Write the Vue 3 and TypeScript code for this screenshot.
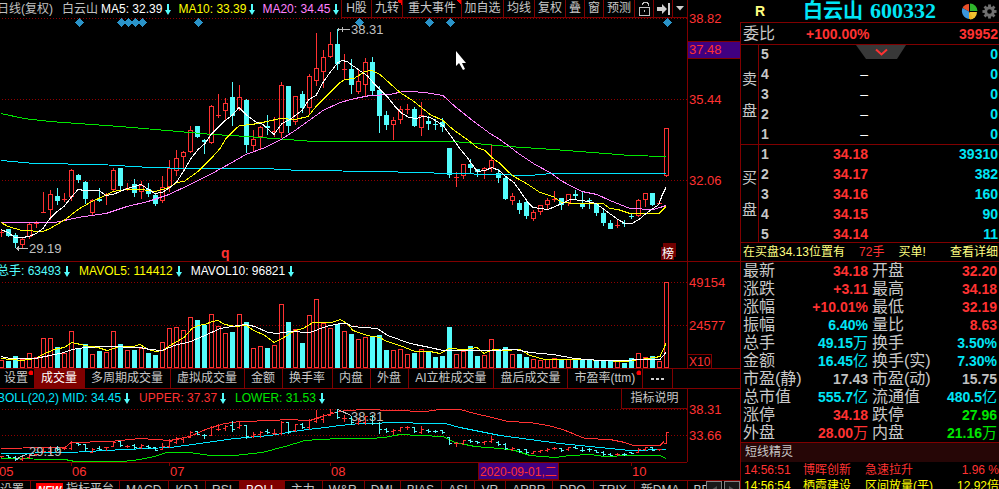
<script setup lang="ts">
import { computed, onBeforeUnmount, onMounted, ref } from 'vue'

type Candle = [high: number, top: number, bottom: number, low: number, dir: 0 | 1]
type Point = [number, number]

const BASE = 687
const plot = ref<HTMLElement | null>(null)
const width = ref(BASE)
let observer: ResizeObserver | undefined
onMounted(() => {
  observer = new ResizeObserver(() => {
    if (plot.value) width.value = plot.value.clientWidth || BASE
  })
  if (plot.value) observer.observe(plot.value)
})
onBeforeUnmount(() => observer?.disconnect())

const sx = (x: number) => (x * width.value) / BASE
const cx = (i: number) => Math.floor(sx(1.5 + 7 * i)) + 0.5
const line = (pts: Point[]) => pts.map(([x, y]) => `${sx(x).toFixed(1)},${y + 0.5}`).join(' ')

// 1 = rising day, 0 = falling day
const candles: Candle[] = [
  [230, 232, 233, 237, 1], [229, 229, 236, 237, 0], [233, 235, 243, 248, 0], [237, 239, 245, 247, 1],
  [223, 224, 237, 238, 1], [221, 223, 223, 228, 1], [192, 212, 212, 213, 1], [190, 194, 210, 219, 1],
  [188, 196, 201, 205, 0], [193, 199, 199, 202, 1], [169, 170, 197, 200, 1], [174, 175, 180, 183, 0],
  [181, 182, 199, 204, 0], [199, 200, 213, 214, 1], [188, 199, 201, 202, 0], [193, 194, 194, 205, 1],
  [168, 170, 190, 190, 1], [168, 168, 186, 190, 0], [183, 188, 190, 191, 1], [179, 184, 193, 197, 0],
  [181, 185, 192, 198, 1], [183, 189, 194, 197, 0], [193, 195, 204, 206, 0], [176, 187, 201, 202, 1],
  [160, 168, 187, 191, 1], [150, 158, 171, 175, 1], [151, 152, 157, 170, 1], [126, 130, 152, 152, 1],
  [126, 126, 137, 138, 0], [139, 140, 142, 154, 0], [105, 106, 143, 143, 1], [94, 115, 115, 118, 1],
  [98, 103, 111, 119, 1], [82, 97, 116, 126, 0], [85, 97, 109, 110, 1], [99, 100, 145, 153, 0],
  [130, 139, 146, 151, 1], [126, 127, 137, 148, 1], [115, 126, 128, 135, 0], [117, 131, 132, 137, 1],
  [82, 85, 133, 137, 1], [86, 86, 126, 133, 0], [96, 96, 122, 124, 1], [91, 94, 108, 113, 0],
  [74, 76, 108, 114, 1], [33, 68, 81, 85, 1], [50, 57, 72, 87, 1], [32, 44, 57, 57, 1],
  [29, 44, 64, 70, 0], [54, 69, 69, 80, 1], [59, 69, 85, 94, 0], [69, 81, 92, 93, 1],
  [58, 62, 85, 96, 1], [57, 62, 91, 95, 0], [86, 90, 116, 133, 0], [111, 115, 125, 130, 0],
  [117, 120, 125, 139, 1], [106, 109, 120, 123, 1], [104, 109, 109, 114, 1], [107, 109, 126, 127, 0],
  [102, 115, 128, 135, 1], [116, 121, 124, 130, 0], [119, 124, 125, 130, 0], [118, 122, 127, 132, 0],
  [148, 148, 175, 178, 0], [172, 177, 177, 187, 1], [164, 164, 176, 178, 1], [159, 164, 168, 173, 0],
  [169, 169, 172, 177, 0], [167, 168, 171, 178, 1], [145, 160, 168, 171, 1], [169, 173, 178, 183, 0],
  [177, 178, 199, 200, 0], [193, 196, 201, 204, 1], [200, 203, 210, 214, 0], [200, 202, 216, 219, 0],
  [210, 212, 219, 220, 1], [205, 205, 212, 214, 1], [198, 200, 205, 209, 1], [191, 199, 199, 202, 1],
  [198, 198, 205, 210, 0], [194, 194, 203, 205, 1], [190, 194, 196, 199, 0], [192, 204, 207, 209, 0],
  [198, 200, 201, 209, 0], [204, 204, 213, 216, 0], [209, 213, 223, 226, 0], [220, 223, 229, 229, 0],
  [219, 225, 225, 228, 1], [220, 223, 224, 227, 0], [214, 216, 217, 219, 0], [199, 200, 216, 216, 1],
  [193, 193, 200, 206, 1], [193, 193, 205, 206, 0], [200, 203, 203, 204, 1], [128, 128, 176, 176, 1],
]

const volumes = [
  360, 361, 356, 359, 353, 357, 338, 338, 347, 353, 331, 348, 344, 354, 351, 352, 331, 344, 350, 350,
  348, 353, 355, 342, 328, 327, 330, 317, 320, 325, 314, 326, 333, 332, 314, 322, 348, 346, 348, 345,
  304, 322, 329, 343, 315, 299, 323, 328, 324, 331, 334, 339, 337, 337, 335, 350, 350, 349, 354, 353,
  349, 351, 357, 356, 327, 354, 351, 346, 356, 355, 339, 349, 347, 354, 354, 357, 359, 360, 359, 358,
  360, 359, 358, 359, 360, 360, 361, 361, 361, 363, 358, 353, 357, 356, 361, 282,
]

const ma5: Point[] = [[1, 229], [8, 232], [15, 237], [22, 237], [29, 236], [36, 233], [43, 228], [50, 218], [57, 211], [64, 206], [71, 197], [78, 189], [85, 190], [99, 190], [106, 195], [113, 194], [127, 188], [141, 184], [147, 188], [155, 193], [162, 192], [170, 187], [177, 181], [184, 170], [191, 158], [198, 149], [205, 143], [211, 134], [218, 127], [225, 120], [232, 115], [239, 107], [246, 114], [255, 121], [263, 124], [274, 134], [282, 123], [290, 119], [302, 110], [309, 99], [316, 95], [323, 82], [330, 72], [338, 62], [342, 60], [347, 61], [354, 66], [361, 71], [367, 75], [374, 83], [381, 90], [388, 97], [395, 106], [402, 113], [409, 117], [416, 118], [423, 116], [430, 117], [437, 121], [443, 125], [452, 137], [459, 147], [468, 158], [475, 168], [478, 171], [485, 170], [492, 167], [499, 170], [507, 177], [514, 182], [521, 192], [528, 202], [533, 207], [548, 209], [555, 206], [562, 203], [570, 199], [583, 200], [596, 203], [604, 209], [611, 214], [618, 219], [625, 223], [632, 223], [639, 219], [646, 213], [653, 208], [659, 204], [662, 195], [666, 187]]
const ma10: Point[] = [[1, 222], [8, 226], [22, 230], [43, 231], [50, 228], [64, 220], [78, 209], [92, 201], [105, 195], [113, 191], [127, 189], [141, 189], [155, 191], [169, 187], [177, 182], [184, 181], [198, 171], [212, 157], [220, 148], [226, 138], [236, 128], [240, 125], [252, 124], [267, 121], [280, 118], [295, 119], [308, 116], [316, 106], [330, 92], [340, 82], [345, 79], [354, 78], [365, 71], [372, 70], [380, 74], [400, 92], [414, 101], [430, 114], [443, 120], [453, 129], [470, 141], [477, 147], [485, 150], [492, 157], [500, 163], [508, 171], [514, 176], [521, 180], [528, 184], [540, 192], [553, 196], [562, 202], [576, 203], [603, 203], [610, 208], [618, 209], [630, 213], [659, 213], [666, 206]]
const ma20: Point[] = [[1, 222], [55, 222], [78, 217], [106, 213], [127, 206], [148, 201], [169, 194], [190, 184], [212, 173], [232, 162], [246, 154], [265, 147], [281, 139], [295, 130], [309, 120], [323, 110], [340, 102], [355, 98], [370, 95], [390, 94], [403, 91], [410, 91], [425, 92], [443, 95], [455, 106], [470, 118], [482, 127], [490, 133], [500, 139], [508, 145], [520, 154], [535, 164], [550, 172], [561, 180], [568, 184], [582, 191], [597, 194], [610, 200], [630, 208], [653, 209], [660, 207], [666, 205]]
const maLong: Point[] = [[1, 113], [24, 118], [50, 121], [120, 126], [167, 130], [213, 134], [247, 136], [287, 139], [313, 141], [453, 141], [508, 146], [553, 149], [593, 152], [630, 155], [666, 156]]
const maYear: Point[] = [[1, 160], [35, 163], [100, 164], [150, 167], [190, 168], [265, 168], [300, 170], [383, 171], [412, 172], [455, 173], [530, 175], [552, 173], [666, 173]]
const vol5: Point[] = [[1, 358], [22, 360], [36, 358], [43, 354], [54, 349], [64, 347], [72, 342], [85, 345], [98, 347], [107, 350], [120, 346], [133, 346], [140, 344], [148, 349], [156, 351], [163, 350], [170, 345], [184, 337], [192, 328], [198, 325], [205, 324], [212, 321], [218, 320], [225, 324], [235, 326], [246, 325], [254, 330], [265, 335], [274, 342], [282, 338], [295, 330], [303, 328], [313, 322], [332, 322], [340, 319], [347, 323], [353, 330], [367, 335], [380, 337], [387, 341], [400, 345], [415, 351], [430, 351], [440, 353], [449, 348], [465, 349], [477, 347], [484, 353], [493, 349], [505, 350], [520, 349], [530, 355], [545, 359], [585, 359], [600, 360], [625, 361], [640, 359], [655, 357], [660, 356], [666, 343]]
const vol10: Point[] = [[1, 356], [10, 358], [35, 358], [50, 355], [64, 352], [72, 349], [85, 347], [105, 346], [140, 347], [150, 349], [162, 350], [177, 344], [188, 342], [205, 335], [220, 328], [232, 326], [245, 324], [255, 326], [268, 332], [277, 333], [290, 331], [310, 332], [318, 329], [326, 326], [340, 323], [347, 323], [352, 326], [377, 328], [388, 335], [410, 343], [430, 347], [443, 350], [490, 350], [515, 349], [530, 352], [553, 354], [575, 358], [600, 360], [625, 360], [640, 359], [660, 359], [666, 352]]
const upper: Point[] = [[1, 448], [45, 447], [65, 447], [71, 442], [110, 441], [120, 440], [140, 438], [170, 440], [190, 436], [208, 428], [225, 423], [240, 421], [275, 420], [285, 419], [310, 420], [325, 415], [340, 411], [347, 410], [365, 409], [395, 410], [425, 411], [440, 409], [460, 409], [475, 413], [492, 417], [508, 421], [530, 422], [548, 425], [563, 429], [575, 434], [585, 438], [610, 439], [625, 442], [633, 445], [660, 445], [664, 441]]
const mid: Point[] = [[1, 453], [70, 452], [105, 450], [125, 449], [170, 447], [200, 443], [235, 438], [270, 435], [300, 430], [325, 427], [340, 425], [360, 423], [405, 422], [420, 423], [445, 423], [460, 427], [480, 431], [500, 435], [530, 439], [560, 443], [590, 446], [620, 449], [630, 450], [666, 449]]
const lower: Point[] = [[1, 458], [65, 459], [75, 461], [123, 461], [140, 459], [155, 456], [166, 452], [190, 452], [210, 455], [235, 455], [262, 452], [285, 446], [305, 440], [320, 439], [340, 438], [370, 438], [385, 437], [400, 434], [420, 435], [443, 436], [455, 442], [475, 446], [500, 448], [515, 450], [530, 455], [555, 457], [570, 455], [590, 454], [605, 456], [630, 455], [660, 455], [666, 458]]

const scaleBoll = (y: number) => Math.round(409 + (y - 30) * 0.2333) + 0.5
const ohlc = computed(() =>
  candles.map(([h, t, b, l, up], i) => {
    const x = cx(i)
    const open = scaleBoll(up ? b : t)
    const close = scaleBoll(up ? t : b)
    return { up, d: `M${x} ${scaleBoll(h) - 0.5}V${scaleBoll(l) + 0.5}M${x - 2.5} ${open}H${x}M${x} ${close}H${x + 2.5}` }
  }),
)
const markers = [79, 121, 128, 135, 142, 198, 359, 429, 450, 667]

const tools = [
  { name: 'H股', w: 30 }, { name: '九转', w: 31, flag: true }, { name: '重大事件', w: 59, flag: true },
  { name: '加自选', w: 42 }, { name: '均线', w: 31 }, { name: '复权', w: 31 }, { name: '叠', w: 19 },
  { name: '窗', w: 19 }, { name: '预测', w: 31 },
]
const volTabs = ['设置', '成交量', '多周期成交量', '虚拟成交量', '金额', '换手率', '内盘', '外盘', 'AI立桩成交量', '盘后成交量', '市盈率(ttm)']
const indicators = ['MACD', 'KDJ', 'RSI', 'BOLL', '主力', 'W&R', 'DMI', 'BIAS', 'ASI', 'VR', 'ARBR', 'DPO', 'TRIX', '新DMA', 'BBI']
const months = [{ x: -1, t: '05' }, { x: 72, t: '06' }, { x: 170, t: '07' }, { x: 331, t: '08' }, { x: 632, t: '10' }]

const sells = [5, 4, 3, 2, 1]
const buys: [string, string][] = [['34.18', '39310'], ['34.17', '382'], ['34.16', '160'], ['34.15', '90'], ['34.14', '11']]

interface Stat { label: string; value: string; unit?: string; tone: string }
const stats: [Stat, Stat][] = [
  [{ label: '最新', value: '34.18', tone: 'up' }, { label: '开盘', value: '32.20', tone: 'up' }],
  [{ label: '涨跌', value: '+3.11', tone: 'up' }, { label: '最高', value: '34.18', tone: 'up' }],
  [{ label: '涨幅', value: '+10.01%', tone: 'up' }, { label: '最低', value: '32.19', tone: 'up' }],
  [{ label: '振幅', value: '6.40%', tone: 'info' }, { label: '量比', value: '8.63', tone: 'up' }],
  [{ label: '总手', value: '49.15', unit: '万', tone: 'info' }, { label: '换手', value: '3.50%', tone: 'info' }],
  [{ label: '金额', value: '16.45', unit: '亿', tone: 'info' }, { label: '换手(实)', value: '7.30%', tone: 'info' }],
  [{ label: '市盈(静)', value: '17.43', tone: 'plain' }, { label: '市盈(动)', value: '15.75', tone: 'plain' }],
  [{ label: '总市值', value: '555.7', unit: '亿', tone: 'info' }, { label: '流通值', value: '480.5', unit: '亿', tone: 'info' }],
  [{ label: '涨停', value: '34.18', tone: 'up' }, { label: '跌停', value: '27.96', tone: 'down' }],
  [{ label: '外盘', value: '28.00', unit: '万', tone: 'up' }, { label: '内盘', value: '21.16', unit: '万', tone: 'down' }],
]
const activeVol = ref('成交量')
const activeInd = ref('BOLL')
</script>

<template>
  <div class="app">
    <main class="charts">
      <section class="pane">
        <div ref="plot" class="plot">
          <header class="bar">
            <div class="legend top">
              <span class="gray period">日线(复权)</span><span class="gray name">白云山</span>
              <span class="white">MA5: 32.39<svg class="arrow" viewBox="0 0 6 11"><path d="M2 0h2v6h2L3 11 0 6h2z" /></svg></span>
              <span class="yellow">MA10: 33.39<svg class="arrow" viewBox="0 0 6 11"><path d="M2 0h2v6h2L3 11 0 6h2z" /></svg></span>
              <span class="pink">MA20: 34.45<svg class="arrow" viewBox="0 0 6 11"><path d="M2 0h2v6h2L3 11 0 6h2z" /></svg></span>
            </div>
            <nav class="tools">
              <button v-for="t in tools" :key="t.name" type="button" :class="{ flag: t.flag }" :style="{ width: t.w + 'px' }">{{ t.name }}</button>
              <button type="button" class="ico" aria-label="锁定">
                <svg width="13" height="15" viewBox="0 0 13 15" fill="none" stroke="#c0c0c0" shape-rendering="crispEdges"><path d="M1.500 6.500h10v8h-10zM6.500 9v2" /><path d="M4.500 4V2.500h1v-1h4v1h1V5" /></svg>
              </button>
              <button type="button" class="ico" aria-label="前进">
                <svg width="13" height="12" viewBox="0 0 13 12"><path d="M0 4h5V1l5 5-5 5V8H0zM11 0h2v12h-2z" fill="#d0d0d0" /></svg>
              </button>
              <button type="button" class="ico last" aria-label="更多">
                <svg width="8" height="5" viewBox="0 0 8 5"><path d="M0 0h8L4 4.500z" fill="#d0d0d0" /></svg>
              </button>
            </nav>
          </header>
          <svg class="k" :viewBox="`0 18 ${width} 243`" shape-rendering="crispEdges">
            <path class="grid" :d="`M2 18.500H${width}M2 99.500H${width}M2 180.500H${width}`" />
            <g v-for="(c, i) in candles" :key="i" :class="c[4] ? 'rise' : 'fall'">
              <template v-if="c[4] && c[2] - c[1] > 2">
                <path :d="`M${cx(i)} ${c[0]}V${c[1]}M${cx(i)} ${c[2]}V${c[3] + 1}`" />
                <rect :x="cx(i) - 2" :y="c[1] + 0.5" width="4" :height="c[2] - c[1] - 1" fill="none" />
              </template>
              <template v-else>
                <path :d="`M${cx(i)} ${c[0]}V${c[3]}`" />
                <rect class="solid" :x="cx(i) - 2.5" :y="c[1]" width="5" :height="Math.max(c[2] - c[1], 1)" />
              </template>
            </g>
            <polyline class="ln s-green" :points="line(maLong)" />
            <polyline class="ln s-cyan" :points="line(maYear)" />
            <polyline class="ln s-pink" :points="line(ma20)" />
            <polyline class="ln s-yellow" :points="line(ma10)" />
            <polyline class="ln s-white" :points="line(ma5)" />
            <path v-for="m in markers" :key="m" class="mark" :d="`M${sx(m) + 0.5} 18l4.500 4.500-4.500 4.500-4.500-4.500z`" />
            <path class="lead" :d="`M${sx(338)} 29.500h12M${sx(338)} 28v3M${sx(342)} 27v5`" />
            <text :x="sx(351)" y="34">38.31</text>
            <path class="lead" :d="`M${sx(16)} 248.500h12M${sx(17.5)} 247v3M${sx(18.5)} 246v5`" />
            <text :x="sx(29)" y="253">29.19</text>
            <text class="q" :x="sx(221)" y="258">q</text>
            <path fill="#700000" :d="`M${sx(663)} 243h13v14h-2v3h-13v-13h2z`" />
            <text class="rank" :x="sx(662)" y="258">榜</text>
            <path fill="#fff" shape-rendering="auto" :d="`M${sx(456)} 51v15l3-3 4 7 2-1-3-6h4z`" />
          </svg>
        </div>
        <svg class="axis tall" viewBox="0 0 52 261">
          <rect class="cursor-box" x="-1" y="41.500" width="54" height="17" shape-rendering="crispEdges" />
          <text x="1" y="23">38.82</text><text x="1" y="54">37.48</text><text x="1" y="104">35.44</text><text x="1" y="185">32.06</text>
        </svg>
      </section>

      <section class="pane vol">
        <div class="plot">
          <div class="legend">
            <span class="aqua">总手: 63493<svg class="arrow" viewBox="0 0 6 11"><path d="M2 0h2v6h2L3 11 0 6h2z" /></svg></span>
            <span class="yellow">MAVOL5: 114412<svg class="arrow" viewBox="0 0 6 11"><path d="M2 0h2v6h2L3 11 0 6h2z" /></svg></span>
            <span class="white">MAVOL10: 96821<svg class="arrow" viewBox="0 0 6 11"><path d="M2 0h2v6h2L3 11 0 6h2z" /></svg></span>
          </div>
          <svg class="v" :viewBox="`0 281 ${width} 87`" shape-rendering="crispEdges">
            <path class="grid" :d="`M2 282.500H${width}M2 325.500H${width}`" />
            <g v-for="(v, i) in volumes" :key="i" :class="candles[i][4] ? 'rise' : 'fall'">
              <rect v-if="candles[i][4]" :x="cx(i) - 2" :y="v + 0.5" width="4" :height="367 - v" fill="none" />
              <rect v-else class="solid" :x="cx(i) - 2.5" :y="v" width="5" :height="368 - v" />
            </g>
            <polyline class="ln s-yellow" :points="line(vol5)" />
            <polyline class="ln s-white" :points="line(vol10)" />
          </svg>
        </div>
        <svg class="axis short" viewBox="0 0 52 106">
          <text x="1" y="25">49154</text><text x="1" y="68">24577</text>
          <path d="M0 92.500h23.500V106" fill="none" stroke="#800000" shape-rendering="crispEdges" /><text x="1" y="104" class="mult">X10</text>
        </svg>
      </section>

      <nav class="tabs">
        <button v-for="(t, i) in volTabs" :key="t" type="button" :class="{ on: t === activeVol, dot: i === 0 || i === 10 }" @click="activeVol = t">{{ t }}</button>
        <button type="button" class="more" aria-label="更多指标">
          <svg width="13" height="2" viewBox="0 0 13 2"><path d="M0 0h3v2H0zM5 0h3v2H5zM10 0h3v2h-3z" fill="#d0d0d0" /></svg>
        </button>
      </nav>

      <section class="pane boll">
        <div class="plot framed">
          <div class="bar short-bar">
            <div class="legend">
              <span class="sky">BOLL(20,2) MID: 34.45<svg class="arrow" viewBox="0 0 6 11"><path d="M2 0h2v6h2L3 11 0 6h2z" /></svg></span>
              <span class="red">UPPER: 37.37<svg class="arrow" viewBox="0 0 6 11"><path d="M2 0h2v6h2L3 11 0 6h2z" /></svg></span>
              <span class="green">LOWER: 31.53<svg class="arrow" viewBox="0 0 6 11"><path d="M2 0h2v6h2L3 11 0 6h2z" /></svg></span>
            </div>
            <button type="button" class="explain">指标说明</button>
          </div>
          <svg class="b" :viewBox="`0 408 ${width} 54`" shape-rendering="crispEdges">
            <path class="grid" :d="`M2 409.500H${width}M2 435.500H${width}`" />
            <polyline class="ln s-red" :points="line(upper)" />
            <polyline class="ln s-cyan" :points="line(mid)" />
            <polyline class="ln s-green" :points="line(lower)" />
            <path v-for="(o, i) in ohlc" :key="i" :class="o.up ? 'rise' : 'fall'" :d="o.d" />
            <path class="lead" :d="`M${sx(338)} 409.500l13 6M${sx(16)} 459l11-5M${sx(15)} 458h4`" />
            <text :x="sx(351)" y="421">38.31</text>
            <text :x="sx(29)" y="456">29.19</text>
          </svg>
        </div>
        <svg class="axis low" viewBox="0 0 52 73">
          <text x="1" y="25">38.31</text><text x="1" y="51">33.66</text>
        </svg>
      </section>

      <svg class="dates" height="17">
        <g v-for="m in months" :key="m.t"><path :d="`M${sx(m.x) - 0.5} 0v3`" stroke="#800000" /><text :x="sx(m.x)" y="13">{{ m.t }}</text></g>
        <rect class="cursor-box" :x="sx(478) + 0.5" y="-1" width="80" height="17" shape-rendering="crispEdges" />
        <text class="day" :x="sx(479) + 1" y="13">2020-09-01,二</text>
      </svg>

      <nav class="tabs ind">
        <div class="strip">
          <button type="button" class="set">设置</button>
          <button type="button" class="platform"><em>NEW</em>指标平台</button>
          <button v-for="t in indicators" :key="t" type="button" :class="{ on: t === activeInd }" @click="activeInd = t">{{ t }}</button>
        </div>
        <div class="scroll">
          <button type="button" aria-label="向左"><svg width="6" height="8" viewBox="0 0 6 8"><path d="M6 0v8L0 4z" /></svg></button>
          <button type="button" aria-label="向右"><svg width="6" height="8" viewBox="0 0 6 8"><path d="M0 0v8l6-4z" /></svg></button>
        </div>
      </nav>
    </main>

    <aside class="quote">
      <header class="title">
        <b class="r">R</b>
        <h1>白云山 <span>600332</span></h1>
        <div class="icons">
          <svg width="17" height="17" viewBox="0 0 17 17">
            <path d="M8 8.500V1A7.500 7.500 0 0 0 1.500 5z" fill="#e8502a" />
            <path d="M8 8.500L1.500 5A8 8 0 0 0 8 16z" fill="#3a96dc" />
            <path d="M9 9v7.500A7.500 7.500 0 0 0 16 9z" fill="#f2c230" />
            <path d="M9 8V.500A7.500 7.500 0 0 1 16.500 8z" fill="#2fb52c" />
            <path d="M8 8.500V16A8 8 0 0 0 12 15z" fill="#f0b020" />
          </svg>
          <svg width="15" height="15" viewBox="-8 -8 16 16">
            <g fill="#707070"><rect v-for="a in 8" :key="a" x="-1.500" y="-7.500" width="3" height="4" :transform="`rotate(${a * 45})`" /></g>
            <circle r="4" fill="none" stroke="#707070" stroke-width="3" />
          </svg>
        </div>
      </header>
      <div class="body">
        <div class="ratio"><span class="cn">委比</span><b class="up">+100.00%</b><b class="up end">39952</b></div>
        <div class="book sell">
          <div class="side"><span>卖</span><span>盘</span></div>
          <table>
            <tbody>
              <tr v-for="s in sells" :key="s"><th scope="row">{{ s }}</th><td class="dash">{{ s === 5 ? '' : '–' }}</td><td class="qty">0</td></tr>
            </tbody>
          </table>
          <button type="button" class="fold" aria-label="展开">
            <svg width="50" height="14" viewBox="0 0 50 14"><path d="M0 0h50l-9 14H10z" fill="#383838" /><path d="M20 4.500l5.500 5 5.500-5" fill="none" stroke="#ff3232" stroke-width="2" /></svg>
          </button>
        </div>
        <div class="book buy">
          <div class="side"><span>买</span><span>盘</span></div>
          <table>
            <tbody>
              <tr v-for="([p, q], i) in buys" :key="p"><th scope="row">{{ i + 1 }}</th><td class="price">{{ p }}</td><td class="qty">{{ q }}</td></tr>
            </tbody>
          </table>
        </div>
        <div class="tip"><span>在买盘34.13位置有</span><span class="red">72手</span><span>买单!</span><a href="#detail">查看详细</a></div>
        <table class="stats">
          <tbody>
            <tr v-for="(row, i) in stats" :key="i">
              <template v-for="s in row" :key="s.label">
                <th scope="row">{{ s.label }}</th>
                <td :class="s.tone">{{ s.value }}<i v-if="s.unit">{{ s.unit }}</i></td>
              </template>
            </tr>
          </tbody>
        </table>
        <h2>短线精灵</h2>
        <table class="news">
          <tbody>
            <tr class="red"><td class="time">14:56:51</td><td class="stock">博晖创新</td><td>急速拉升</td><td class="num">1.96 %</td></tr>
            <tr class="yellow"><td class="time">14:56:54</td><td class="stock">栖霞建设</td><td>区间放量(平)</td><td class="num">12.92倍</td></tr>
          </tbody>
        </table>
      </div>
    </aside>
  </div>
</template>

<style>
body { background: #000; overflow: hidden; }
</style>

<style scoped>
.app {
  display: flex;
  height: 100vh;
  overflow: hidden;
  background: #000;
  color: #c8c8c8;
  font: 12px/16px "Liberation Sans", "Noto Sans CJK SC", sans-serif;
}
button { all: unset; box-sizing: border-box; cursor: pointer; text-align: center; white-space: nowrap; flex: none; }
svg { display: block; }
text { fill: #c0c0c0; }
.charts { flex: 1; min-width: 0; display: flex; flex-direction: column; }
.charts > * { flex: none; }
.pane { display: flex; border-bottom: 1px solid #800000; }
.plot { flex: 1; min-width: 0; overflow: hidden; }
.plot > svg { width: 100%; }
.k { height: 243px; }
.v { height: 87px; }
.b { height: 54px; }
.axis { width: 52px; flex: none; border-left: 1px solid #800000; }
.axis text { fill: #ff3232; font-size: 13px; }
.axis .mult { font-size: 12px; }
.tall { height: 261px; }
.short { height: 106px; }
.low { height: 73px; }
.cursor-box { fill: #400080; stroke: #800000; }

.bar { display: flex; justify-content: space-between; }
.short-bar { height: 19px; }
.legend { display: flex; gap: 9px; height: 19px; line-height: 19px; white-space: nowrap; margin-left: -3px; }
.legend.top { height: 18px; line-height: 17px; gap: 7px; }
.legend .period { margin-right: 2px; }
.legend .name { margin-right: -4px; }
.legend span { display: flex; align-items: center; }
.arrow { width: 6px; height: 11px; fill: #54fcfc; margin-left: 3px; }
.tools { display: flex; height: 18px; line-height: 17px; }
.tools button { border-left: 1px solid #800000; border-bottom: 1px solid #800000; height: 18px; }
.flag { background: linear-gradient(45deg, transparent 50%, #f00 50%) top right / 5px 5px no-repeat; }
.tools .ico { width: 19px; display: flex; align-items: center; justify-content: center; }
.tools .last { width: 15px; }

.gray { color: #c0c0c0; } .white { color: #fff; } .yellow { color: #ff0; } .pink { color: #ff80ff; }
.aqua { color: #54fcfc; } .sky { color: #00e6ff; } .red { color: #ff3232; } .green { color: #00e600; }

.grid { stroke: #900000; stroke-dasharray: 1 2; }
.rise { stroke: #ff3232; fill: none; }
.fall { stroke: #54fcfc; fill: none; }
.solid { stroke: none; }
.rise .solid { fill: #ff3232; }
.fall .solid { fill: #54fcfc; }
.ln { fill: none; }
.s-green { stroke: #00e600; } .s-cyan { stroke: #00e6ff; } .s-pink { stroke: #ff80ff; }
.s-yellow { stroke: #ff0; } .s-white { stroke: #fff; } .s-red { stroke: #ff3232; }
.mark { fill: #2a93c8; }
.lead { stroke: #c0c0c0; fill: none; }
.k text, .b text { font-size: 13px; }
.k .q { fill: #ff3232; font-weight: bold; font-size: 14px; }
.k .rank { fill: #fff; font-size: 12px; }

.tabs { display: flex; height: 19px; line-height: 19px; border-bottom: 1px solid #800000; }
.tabs button { border-right: 1px solid #800000; padding: 0 7px 0 6px; }
.tabs button:first-child { padding: 0 6px 0 4px; }
.tabs .on { background: #800000; color: #fff; }
.dot { background: radial-gradient(circle at 3px 3px, #f00 2px, transparent 3px) top 1px right 1px / 5px 5px no-repeat; }
.tabs .more { padding: 0 8px; display: flex; align-items: center; }

.boll { border: 0; }
.framed { border-bottom: 1px solid #800000; }
.explain { width: 66px; height: 20px; line-height: 19px; border-left: 1px solid #800000; border-bottom: 1px solid #800000; }
.dates { width: 100%; }
.dates text { fill: #ff3232; font-size: 13px; }
.dates .day { font-size: 12px; }
.ind { border-top: 1px solid #800000; border-bottom: 0; line-height: 17px; }
.strip { display: flex; flex: 1; min-width: 0; overflow: hidden; }
.strip .set:first-child { padding: 0 6px 0 0; }
.strip .platform { display: flex; padding: 2px 5px 0; line-height: 13px; }
.platform em { width: 27px; background: #f00; color: #fff; font: bold italic 10px/15px "Liberation Sans", sans-serif; margin-right: 3px; }
.scroll { flex: none; display: flex; gap: 2px; }
.scroll button, .scroll button:first-child { width: 16px; height: 17px; border: 1px solid #808080; background: #181818; display: flex; justify-content: center; align-items: center; padding: 0; }
.scroll path { fill: #505050; }

.quote { width: 259px; flex: none; }
.title { display: flex; align-items: center; height: 22px; padding: 0 2px 0 15px; }
.title .r { color: #ffff80; font-size: 14px; width: 48px; }
h1 { margin: 0; font: bold 20px/22px "Liberation Serif", "Noto Sans CJK SC", serif; color: #00e6f6; flex: 1; white-space: nowrap; }
h1 span { font-size: 22px; margin-left: 2px; }
.icons { display: flex; gap: 4px; align-items: center; }
.body { border-left: 1px solid #800000; border-top: 1px solid #800000; }
b, .book, .stats td { font-weight: bold; font-size: 14px; }
.up { color: #ff3232; } .down { color: #00e600; } .info { color: #00e6f6; } .plain { color: #c0c0c0; }
.ratio { display: flex; align-items: center; height: 21px; padding: 0 1px 0 2px; }
.cn { font-size: 16px; width: 63px; }
.end { margin-left: auto; }
.book { display: flex; align-items: flex-start; position: relative; border-top: 1px solid #800000; }
.side { width: 17px; height: 100%; border-right: 1px solid #800000; display: flex; flex-direction: column; align-items: center; justify-content: center; gap: 16px; font-weight: normal; font-size: 15px; }
.book table { flex: 1; border-collapse: collapse; margin-top: -1px; }
.book td, .book th { padding: 0; height: 20px; line-height: 20px; text-align: left; }
.sell { height: 99px; }
.buy { height: 97px; }
.book th { width: 28px; padding-left: 2px; }
.book td.qty { text-align: right; padding-right: 1px; color: #00e6f6; }
.book td.price, .book td.dash { width: 79px; text-align: right; color: #ff3232; }
.book td.dash { color: #fff; font-weight: normal; }
.fold { position: absolute; top: 0; left: 115px; }
.tip { display: flex; height: 18px; line-height: 18px; padding: 0 1px 0 2px; border-top: 1px solid #800000; border-bottom: 1px solid #800000; color: #ffff80; gap: 14px; white-space: nowrap; }
.tip a { color: inherit; text-decoration: none; margin-left: auto; }
.stats { width: 100%; border-collapse: collapse; table-layout: fixed; }
.stats th, .stats td { height: 18px; line-height: 18px; padding: 0 2px; white-space: nowrap; }
.stats th { font-weight: normal; font-size: 16px; text-align: left; }
.stats td { text-align: right; }
.stats i { font-style: normal; font-weight: normal; font-size: 15px; }
h2 { margin: 0; padding-left: 4px; height: 19px; font: 12px/19px "Liberation Sans", "Noto Sans CJK SC", sans-serif; background: #260606; border-top: 1px solid #800000; }
.news { width: 100%; border-collapse: collapse; }
.news td { padding: 0; line-height: 16px; white-space: nowrap; }
.news .time { width: 59px; padding-left: 3px; }
.news .stock { width: 62px; }
.news .num { text-align: right; }
</style>
